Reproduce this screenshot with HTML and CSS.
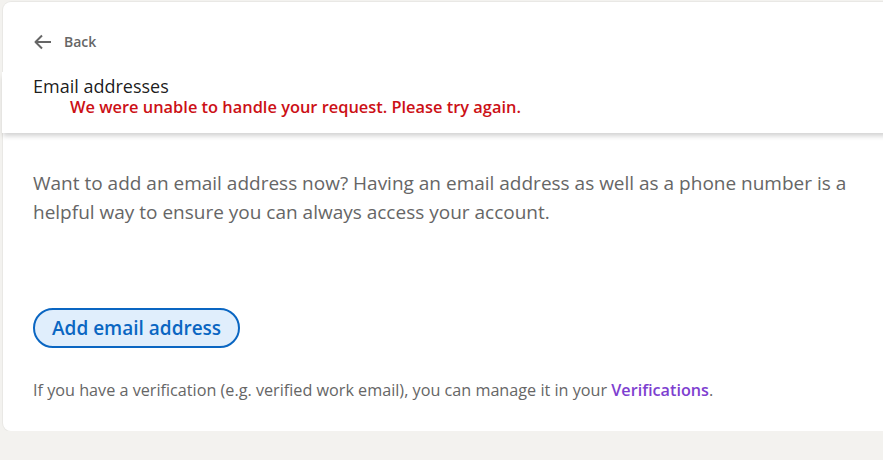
FILE: index.html
```html
<!DOCTYPE html>
<html lang="en">
<head>
    <meta charset="UTF-8">
    <meta name="viewport" content="width=device-width, initial-scale=1.0">
    <title>Email addresses</title>
    <link rel="stylesheet" href="styles.css">
</head>
<body>
    <main class="card">
        <div class="back-row">
            <a class="back-link" href="#">
                <svg class="back-icon" width="18" height="16" viewBox="0 0 18 16" aria-hidden="true">
                    <path d="M8 1.5L1.5 8L8 14.5M1.5 8H17" fill="none" stroke="#666" stroke-width="2" stroke-linejoin="round"/>
                </svg>
                <span>Back</span>
            </a>
        </div>

        <header class="section-header">
            <h1 class="title">Email addresses</h1>
            <p class="error">We were unable to handle your request. Please try again.</p>
        </header>

        <section class="content">
            <p class="intro">Want to add an email address now? Having an email address as well as a phone number is a helpful way to ensure you can always access your account.</p>
            <button class="add-btn" type="button">Add email address</button>
            <p class="note">If you have a verification (e.g. verified work email), you can manage it in your <a href="#">Verifications</a>.</p>
        </section>
    </main>
</body>
</html>
```

FILE: styles.css
```css
body {
    margin: 0;
    padding: 2px 0 0 3px;
    background-color: #f3f2ef;
    overflow: hidden;
    font-family: "Segoe UI", "Open Sans", "Liberation Sans", sans-serif;
}
.card {
    width: 900px;
    height: 429px;
    background-color: #fff;
    border-radius: 8px;
    box-shadow: 0 0 0 1px rgba(0, 0, 0, 0.04);
}
.back-row {
    padding: 30px 0 0 31px;
    height: 40px;
}
.back-link {
    display: inline-flex;
    align-items: center;
    gap: 12px;
    color: #666;
    font-size: 14px;
    font-weight: 600;
    text-decoration: none;
}
.section-header {
    margin-left: -1px;
    padding: 4px 0 0 31px;
    height: 57px;
    background-color: #fff;
    box-shadow: 0 4px 5px -1px rgba(0, 0, 0, 0.18);
    position: relative;
}
.title {
    margin: 0;
    font-size: 18px;
    font-weight: 500;
    line-height: 20px;
    color: rgba(0, 0, 0, 0.9);
}
.error {
    margin: 1px 0 0 37px;
    font-size: 16.4px;
    font-weight: 600;
    line-height: 19px;
    color: #cc1016;
}
.content {
    padding: 36px 0 0 30px;
}
.intro {
    margin: 0;
    width: 830px;
    font-size: 19px;
    line-height: 29px;
    color: #666;
}
.add-btn {
    display: block;
    margin-top: 81px;
    height: 40px;
    padding: 0 17px;
    border: 2px solid #0a66c2;
    border-radius: 20px;
    background-color: #e0eefc;
    color: #0a66c2;
    font-family: inherit;
    font-size: 19px;
    font-weight: 600;
}
.note {
    margin: 31px 0 0;
    font-size: 16.2px;
    color: #666;
}
.note a {
    color: #7e3fd0;
    font-weight: 600;
    text-decoration: none;
}
```
